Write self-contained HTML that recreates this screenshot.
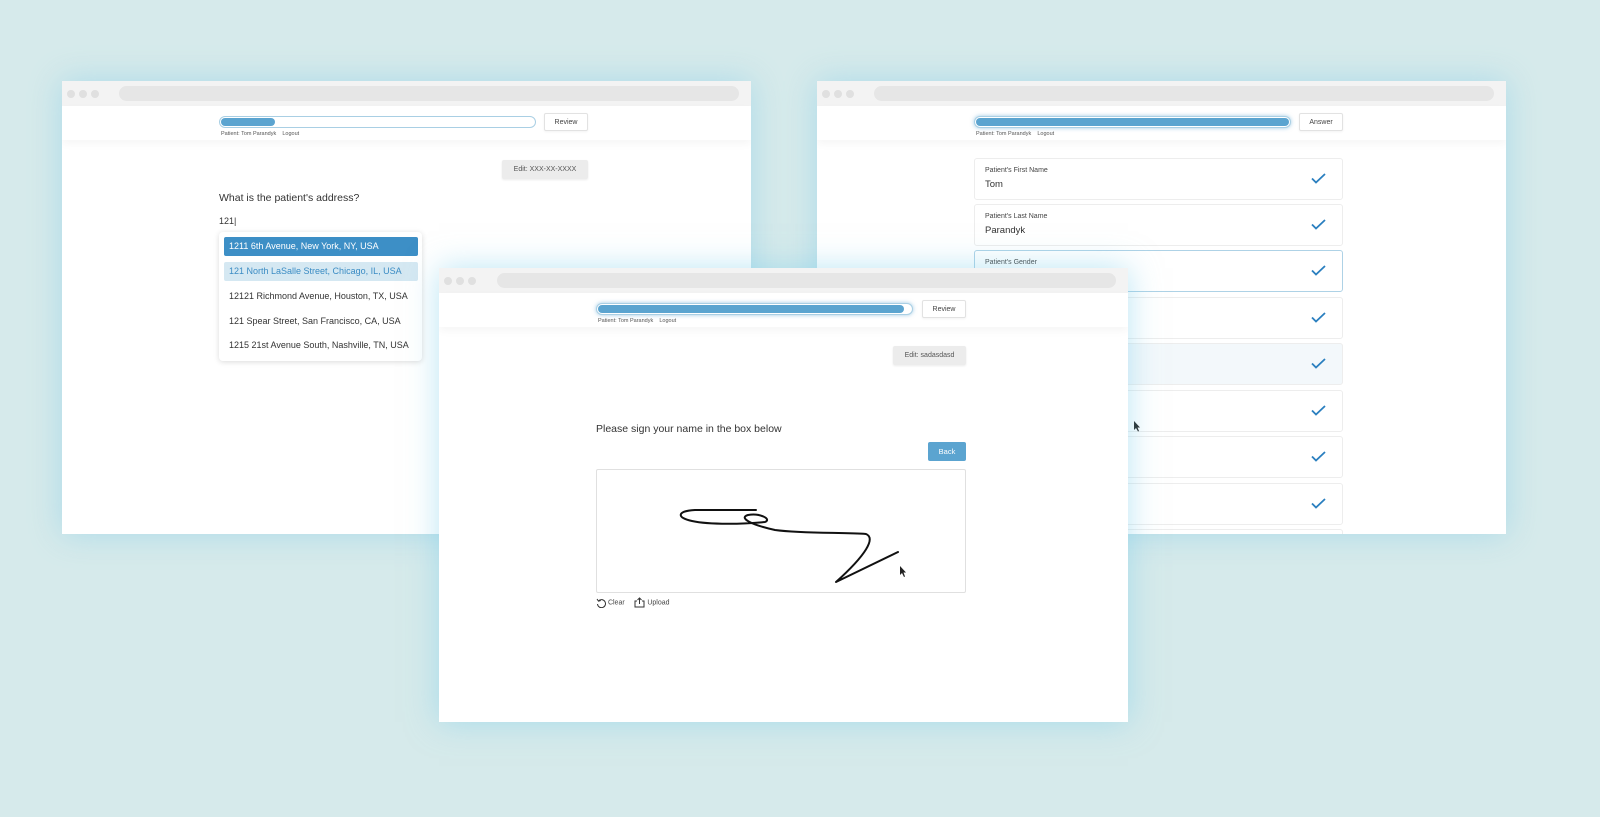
<!DOCTYPE html>
<html><head><style>
*{box-sizing:border-box;margin:0;padding:0}
body{width:1600px;height:817px;background:#d6eaeb;position:relative;overflow:hidden;font-family:"Liberation Sans",sans-serif;color:#333}
.win{position:absolute;width:689px;height:453px;background:#fff;overflow:hidden;box-shadow:0 0 30px rgba(120,200,230,.45)}
.tb{position:absolute;left:0;top:0;right:0;height:25px;background:#f3f3f3}
.dot{position:absolute;top:9px;width:8px;height:8px;border-radius:50%;background:#e0e0e0}
.addr{position:absolute;left:57px;right:12px;top:5px;height:15px;border-radius:8px;background:#e6e6e6}
.hdr{position:absolute;left:0;right:0;top:25px;height:34px;background:#fff;box-shadow:0 4px 8px rgba(0,0,0,.04)}
.prog{position:absolute;height:12px;border:1px solid #a9cfe4;border-radius:7px;background:#fff}
.fill{position:absolute;left:1px;top:1px;bottom:1px;border-radius:6px;background:#5ba4d0}
.pt{position:absolute;font-size:5.5px;color:#555}
.btn{position:absolute;border:1px solid #e2e2e2;border-radius:2px;background:#fff;font-size:7px;color:#444;box-shadow:0 1px 2px rgba(0,0,0,.05);display:flex;align-items:center;justify-content:center}
.edit{position:absolute;height:19px;background:#ececec;border-radius:2px;font-size:7px;color:#555;display:flex;align-items:center;justify-content:center;box-shadow:0 1px 2px rgba(0,0,0,.08)}
.row{position:absolute;left:157px;width:369px;height:42px;border:1px solid #ededed;border-radius:3px;background:#fff}
.row .l{position:absolute;left:10px;top:8px;font-size:7px;color:#444}
.row .v{position:absolute;left:10px;top:20px;font-size:9.5px;color:#333}
.row svg{position:absolute;right:16px;top:14px}
.opt{position:absolute;left:5px;width:194px;height:19px;font-size:9px;line-height:19px;padding-left:5px;border-radius:2px}
</style></head><body>

<!-- window 1 -->
<div class="win" style="left:62px;top:81px">
 <div class="tb"><div class="dot" style="left:5px"></div><div class="dot" style="left:17px"></div><div class="dot" style="left:29px"></div><div class="addr"></div></div>
 <div class="hdr">
  <div class="prog" style="left:157px;top:10px;width:317px"><div class="fill" style="width:54px"></div></div>
  <div class="pt" style="left:159px;top:25px">Patient: Tom Parandyk &nbsp;&nbsp; Logout</div>
  <div class="btn" style="left:482px;top:7px;width:44px;height:18px">Review</div>
 </div>
 <div class="edit" style="left:440px;top:79px;width:86px">Edit: XXX-XX-XXXX</div>
 <div style="position:absolute;left:157px;top:111px;font-size:10.5px;color:#333">What is the patient's address?</div>
 <div style="position:absolute;left:157px;top:135px;font-size:9px;color:#333">121|</div>
 <div style="position:absolute;left:157px;top:151px;width:203px;height:129px;background:#fff;border-radius:4px;box-shadow:0 1px 6px rgba(0,0,0,.15)">
  <div class="opt" style="top:5px;background:#3d8fc6;color:#fff">1211 6th Avenue, New York, NY, USA</div>
  <div class="opt" style="top:30px;background:#d5e8f2;color:#3b8cc4">121 North LaSalle Street, Chicago, IL, USA</div>
  <div class="opt" style="top:55px;color:#333">12121 Richmond Avenue, Houston, TX, USA</div>
  <div class="opt" style="top:80px;color:#333">121 Spear Street, San Francisco, CA, USA</div>
  <div class="opt" style="top:104px;color:#333">1215 21st Avenue South, Nashville, TN, USA</div>
 </div>
</div>

<!-- window 2 -->
<div class="win" style="left:817px;top:81px">
 <div class="tb"><div class="dot" style="left:5px"></div><div class="dot" style="left:17px"></div><div class="dot" style="left:29px"></div><div class="addr"></div></div>
 <div class="hdr">
  <div class="prog" style="left:157px;top:10px;width:317px;box-shadow:0 0 4px rgba(91,164,208,.6)"><div class="fill" style="right:1px"></div></div>
  <div class="pt" style="left:159px;top:25px">Patient: Tom Parandyk &nbsp;&nbsp; Logout</div>
  <div class="btn" style="left:482px;top:7px;width:44px;height:18px">Answer</div>
 </div>
 <div class="row" style="top:77px"><div class="l">Patient's First Name</div><div class="v">Tom</div><svg width="15" height="11" viewBox="0 0 15 11"><path d="M1 5.5L5 9.5L14 1" fill="none" stroke="#2a7fbf" stroke-width="1.8"/></svg></div>
 <div class="row" style="top:123px"><div class="l">Patient's Last Name</div><div class="v">Parandyk</div><svg width="15" height="11" viewBox="0 0 15 11"><path d="M1 5.5L5 9.5L14 1" fill="none" stroke="#2a7fbf" stroke-width="1.8"/></svg></div>
 <div class="row" style="top:169px;border-color:#aed2e6"><div class="l">Patient's Gender</div><svg width="15" height="11" viewBox="0 0 15 11"><path d="M1 5.5L5 9.5L14 1" fill="none" stroke="#2a7fbf" stroke-width="1.8"/></svg></div>
 <div class="row" style="top:216px"><svg width="15" height="11" viewBox="0 0 15 11"><path d="M1 5.5L5 9.5L14 1" fill="none" stroke="#2a7fbf" stroke-width="1.8"/></svg></div>
 <div class="row" style="top:262px;background:#f3f8fb"><svg width="15" height="11" viewBox="0 0 15 11"><path d="M1 5.5L5 9.5L14 1" fill="none" stroke="#2a7fbf" stroke-width="1.8"/></svg></div>
 <div class="row" style="top:309px"><svg width="15" height="11" viewBox="0 0 15 11"><path d="M1 5.5L5 9.5L14 1" fill="none" stroke="#2a7fbf" stroke-width="1.8"/></svg></div>
 <div class="row" style="top:355px"><svg width="15" height="11" viewBox="0 0 15 11"><path d="M1 5.5L5 9.5L14 1" fill="none" stroke="#2a7fbf" stroke-width="1.8"/></svg></div>
 <div class="row" style="top:402px"><svg width="15" height="11" viewBox="0 0 15 11"><path d="M1 5.5L5 9.5L14 1" fill="none" stroke="#2a7fbf" stroke-width="1.8"/></svg></div>
 <div class="row" style="top:448px"></div>
 <svg style="position:absolute;left:316px;top:339px" width="8" height="12" viewBox="0 0 8 12"><path d="M1 1L1 10L3 8L5 11.5L6 11L4.5 7.5L7 7.5Z" fill="#222"/></svg>
</div>

<!-- window 3 -->
<div class="win" style="left:439px;top:268px;height:454px;box-shadow:0 0 30px rgba(120,205,235,.5)">
 <div class="tb"><div class="dot" style="left:5px"></div><div class="dot" style="left:17px"></div><div class="dot" style="left:29px"></div><div class="addr" style="left:58px"></div></div>
 <div class="hdr">
  <div class="prog" style="left:157px;top:10px;width:317px;box-shadow:0 0 4px rgba(91,164,208,.6)"><div class="fill" style="right:8px"></div></div>
  <div class="pt" style="left:159px;top:25px">Patient: Tom Parandyk &nbsp;&nbsp; Logout</div>
  <div class="btn" style="left:483px;top:7px;width:44px;height:18px">Review</div>
 </div>
 <div class="edit" style="left:454px;top:78px;width:73px">Edit: sadasdasd</div>
 <div style="position:absolute;left:157px;top:155px;font-size:10.5px;color:#333">Please sign your name in the box below</div>
 <div style="position:absolute;left:489px;top:174px;width:38px;height:19px;background:#5ba4d0;border-radius:2px;color:#fff;font-size:7.5px;text-align:center;line-height:19px">Back</div>
 <div style="position:absolute;left:157px;top:201px;width:370px;height:124px;border:1px solid #e0e0e0;border-radius:2px"></div>
 <div style="position:absolute;left:157px;top:329px;font-size:7px;color:#444">
  <svg width="10" height="10" viewBox="0 0 10 10" style="vertical-align:middle"><path d="M2.5 3A4 4 0 1 1 1.5 6M1 1L2.5 3.2L4.8 2.5" fill="none" stroke="#333" stroke-width="1"/></svg> Clear
  &nbsp;&nbsp;&nbsp;&nbsp;<svg width="11" height="11" viewBox="0 0 11 11" style="vertical-align:middle"><path d="M3 4H1V10H10V4H8M5.5 7V1M3.5 3L5.5 1L7.5 3" fill="none" stroke="#333" stroke-width="1"/></svg> Upload
 </div>
</div>
<svg style="position:absolute;left:0;top:0" width="1600" height="817" viewBox="0 0 1600 817">
 <path d="M756 510 L695 510 C676 511 677 518 692 521 C710 525 745 524 765 522 C772 519 760 513 748 515 C738 518 752 525 775 530 C805 534 845 532 866 534 C876 538 866 555 836 582 L898 552" fill="none" stroke="#111" stroke-width="2" stroke-linecap="round" stroke-linejoin="round"/>
 <path d="M900 566L900 575L902 573L904 577L905 576.5L903.5 572.5L906 572.5Z" fill="#222"/>
</svg>
</body></html>
